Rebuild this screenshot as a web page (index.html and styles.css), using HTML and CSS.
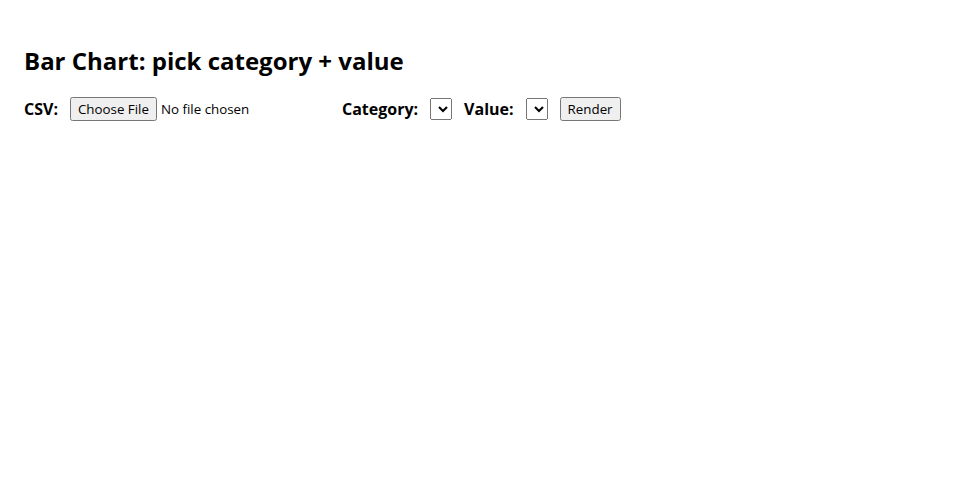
FILE: index.html
```html
<!DOCTYPE html>
<html>
<head>
<meta charset="utf-8">
<link rel="stylesheet" href="styles.css">
</head>
<body>
<div class="page">
  <h1 class="title">Bar Chart: pick category + value</h1>
  <div class="controls">
    <label class="lbl">CSV:</label>
    <input class="file" type="file">
    <label class="lbl">Category:</label>
    <select class="sel"></select>
    <label class="lbl">Value:</label>
    <select class="sel"></select>
    <button class="btn">Render</button>
  </div>
</div>
</body>
</html>
```
FILE: styles.css
```css
html, body { margin: 0; padding: 0; background: #fff; }
body { font-family: "Open Sans", sans-serif; color: #000; }
.page { padding: 24px; }
.title { font-size: 24px; font-weight: 700; margin: 20px 0 20px; line-height: 33px; }
.controls { display: flex; align-items: center; gap: 12px; }
.lbl { font-weight: 700; font-size: 16px; }
.file, .sel, .btn { font-family: "Open Sans", sans-serif; font-size: 13.33px; margin: 0; }
.file::file-selector-button { font-family: "Open Sans", sans-serif; font-size: 13.33px; }
.file { width: 260px; }
```
